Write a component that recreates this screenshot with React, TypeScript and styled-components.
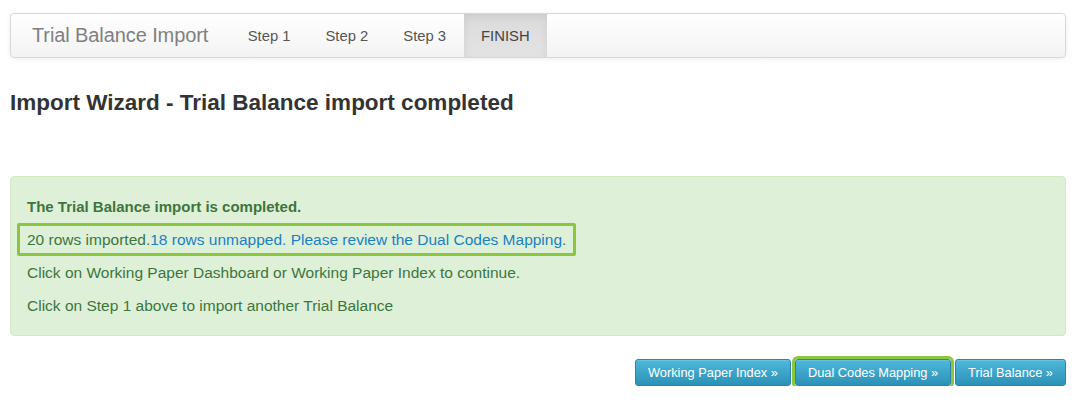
import React from "react";
import styled, { createGlobalStyle } from "styled-components";

const Global = createGlobalStyle`
  html, body { margin: 0; padding: 0; background: #fff; }
  body { font-family: "Liberation Sans", Arial, sans-serif; color: #333; }
`;

const Page = styled.div`
  padding: 13px 12px 0 10px;
`;

const Navbar = styled.nav`
  display: flex;
  align-items: stretch;
  height: 45px;
  box-sizing: border-box;
  border: 1px solid #d8d8d8;
  border-radius: 4px;
  background: linear-gradient(to bottom, #ffffff 0%, #f3f3f3 100%);
  box-shadow: inset 0 1px 0 rgba(255, 255, 255, 0.15), 0 1px 5px rgba(0, 0, 0, 0.075);
  overflow: hidden;
`;

const Brand = styled.div`
  display: flex;
  align-items: center;
  padding: 0 22px 0 21px;
  font-size: 20px;
  color: #808080;
  letter-spacing: -0.1px;
`;

const NavItem = styled.div<{ $active?: boolean }>`
  display: flex;
  align-items: center;
  padding: 0 17.5px;
  font-size: 14.8px;
  color: ${(p) => (p.$active ? "#444" : "#555")};
  background: ${(p) =>
    p.$active ? "linear-gradient(to bottom, #dbdbdb 0%, #e3e3e3 100%)" : "transparent"};
  box-shadow: ${(p) => (p.$active ? "inset 0 3px 9px rgba(0,0,0,0.075)" : "none")};
`;

const Heading = styled.h3`
  margin: 33px 0 61px 0;
  font-size: 22.5px;
  line-height: 24px;
  font-weight: bold;
  color: #333;
`;

const Alert = styled.div`
  box-sizing: border-box;
  height: 160px;
  padding: 13px 15px 13px 6px;
  border: 1px solid #d3e8c4;
  border-radius: 4px;
  background: #dff0d8;
  color: #3c763d;
  display: flex;
  flex-direction: column;
  align-items: flex-start;
`;

const Line = styled.div<{ $bold?: boolean; $highlight?: boolean }>`
  box-sizing: border-box;
  height: 33px;
  display: flex;
  align-items: center;
  padding: 0 ${(p) => (p.$highlight ? "7px" : "10px")};
  font-size: ${(p) => (p.$bold ? "15px" : "15.5px")};
  font-weight: ${(p) => (p.$bold ? "bold" : "normal")};
  border: ${(p) => (p.$highlight ? "3px solid #8cc63f" : "none")};
  border-radius: 2px;
  white-space: nowrap;
`;

const Link = styled.span`
  color: #1a80c6;
`;

const Actions = styled.div`
  display: flex;
  justify-content: flex-end;
  gap: 4px;
  margin-top: 23px;
`;

const Button = styled.button<{ $highlight?: boolean }>`
  height: 27px;
  padding: 0 12px;
  font-family: "Liberation Sans", Arial, sans-serif;
  font-size: 12.8px;
  color: #fff;
  border: 1px solid #2687ab;
  border-radius: 3px;
  background: linear-gradient(to bottom, #4fb8dc 0%, #2c91b6 100%);
  box-shadow: inset 0 1px 0 rgba(255, 255, 255, 0.15);
  cursor: pointer;
  ${(p) => p.$highlight && "outline: 3px solid #8cc63f; outline-offset: 0;"}
`;

export default function App() {
  return (
    <>
      <Global />
      <Page>
        <Navbar>
          <Brand>Trial Balance Import</Brand>
          <NavItem>Step 1</NavItem>
          <NavItem>Step 2</NavItem>
          <NavItem>Step 3</NavItem>
          <NavItem $active>FINISH</NavItem>
        </Navbar>
        <Heading>Import Wizard - Trial Balance import completed</Heading>
        <Alert>
          <Line $bold>The Trial Balance import is completed.</Line>
          <Line $highlight>
            20 rows imported.<Link>18 rows unmapped. Please review the Dual Codes Mapping</Link>.
          </Line>
          <Line>Click on Working Paper Dashboard or Working Paper Index to continue.</Line>
          <Line>Click on Step 1 above to import another Trial Balance</Line>
        </Alert>
        <Actions>
          <Button>Working Paper Index »</Button>
          <Button $highlight>Dual Codes Mapping »</Button>
          <Button>Trial Balance »</Button>
        </Actions>
      </Page>
    </>
  );
}
